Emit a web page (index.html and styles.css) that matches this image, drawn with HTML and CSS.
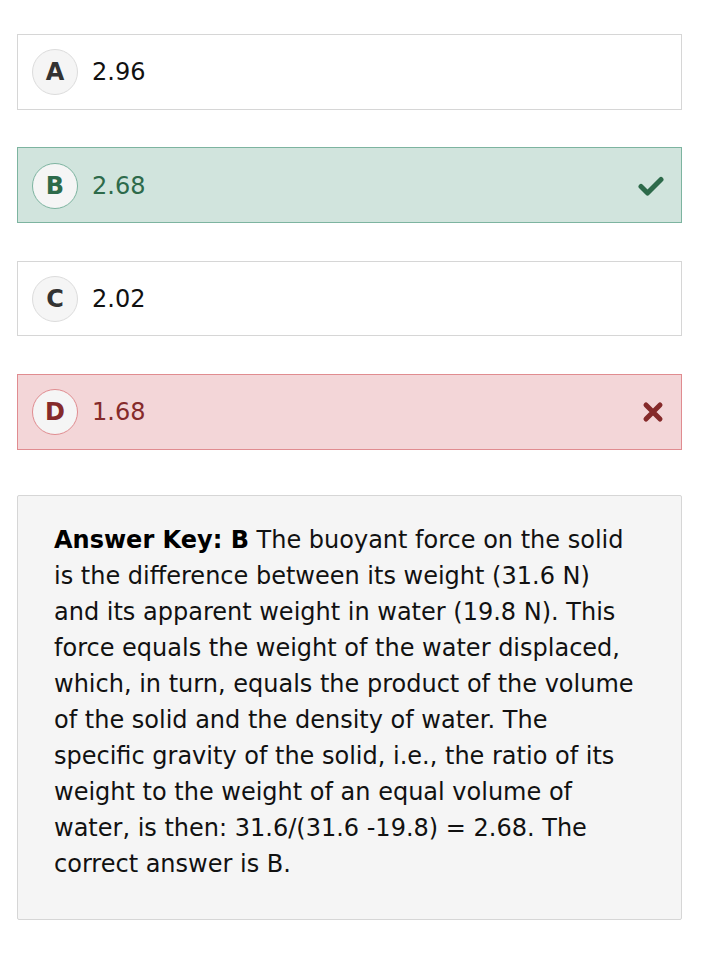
FILE: index.html
```html
<!DOCTYPE html>
<html>
<head>
<meta charset="utf-8">
<link rel="stylesheet" href="styles.css">
</head>
<body>
<div class="quiz">
  <div class="option">
    <span class="letter">A</span>
    <span class="value">2.96</span>
  </div>
  <div class="option correct">
    <span class="letter">B</span>
    <span class="value">2.68</span>
    <svg class="mark" width="26" height="20" viewBox="0 0 26 20"><path d="M3 10.5 L9.5 17 L23 3.5" fill="none" stroke="currentColor" stroke-width="5" stroke-linecap="round" stroke-linejoin="round"/></svg>
  </div>
  <div class="option">
    <span class="letter">C</span>
    <span class="value">2.02</span>
  </div>
  <div class="option wrong">
    <span class="letter">D</span>
    <span class="value">1.68</span>
    <svg class="mark" width="22" height="22" viewBox="0 0 22 22"><path d="M4 4 L18 18 M18 4 L4 18" fill="none" stroke="currentColor" stroke-width="5" stroke-linecap="round"/></svg>
  </div>
  <div class="explanation">
    <p><b>Answer Key: B</b> The buoyant force on the solid<br>is the difference between its weight (31.6 N)<br>and its apparent weight in water (19.8 N). This<br>force equals the weight of the water displaced,<br>which, in turn, equals the product of the volume<br>of the solid and the density of water. The<br>specific gravity of the solid, i.e., the ratio of its<br>weight to the weight of an equal volume of<br>water, is then: 31.6/(31.6 -19.8) = 2.68. The<br>correct answer is B.</p>
  </div>
</div>
</body>
</html>
```
FILE: styles.css
```css
html, body {
  margin: 0;
  padding: 0;
  background: #ffffff;
}
body {
  font-family: "DejaVu Sans", Verdana, sans-serif;
  color: #111;
}
.quiz {
  width: 665px;
  padding: 34px 0 0 17px;
  display: flex;
  flex-direction: column;
  gap: 37.8px;
}
.option {
  box-sizing: border-box;
  height: 75.6px;
  border: 1px solid #d6d6d6;
  background: #fff;
  display: flex;
  align-items: center;
  padding: 1px 17px 0 14px;
  gap: 14px;
}
.letter {
  box-sizing: border-box;
  width: 46px;
  height: 46px;
  border-radius: 50%;
  border: 1px solid #dcdcdc;
  background: #f5f5f5;
  display: flex;
  align-items: center;
  justify-content: center;
  font-weight: bold;
  font-size: 24px;
  color: #333;
}
.value {
  font-size: 24px;
  flex: 1;
}
.mark {
  display: block;
}
.correct {
  background: #d1e4dd;
  border-color: #7db4a0;
  color: #2d6a4a;
}
.correct .letter {
  border-color: #7db4a0;
  color: #2d6a4a;
}
.wrong {
  background: #f3d6d8;
  border-color: #e08c90;
  color: #852a2a;
}
.wrong .letter {
  border-color: #e08c90;
  color: #852a2a;
}
.explanation {
  box-sizing: border-box;
  margin-top: 7.4px;
  height: 425px;
  border: 1px solid #d6d6d6;
  border-radius: 2px;
  background: #f5f5f5;
  padding: 26px 10px 24px 36px;
}
.explanation p {
  margin: 0;
  font-size: 24px;
  line-height: 36px;
  color: #111;
}
.explanation b {
  color: #000;
}
```
